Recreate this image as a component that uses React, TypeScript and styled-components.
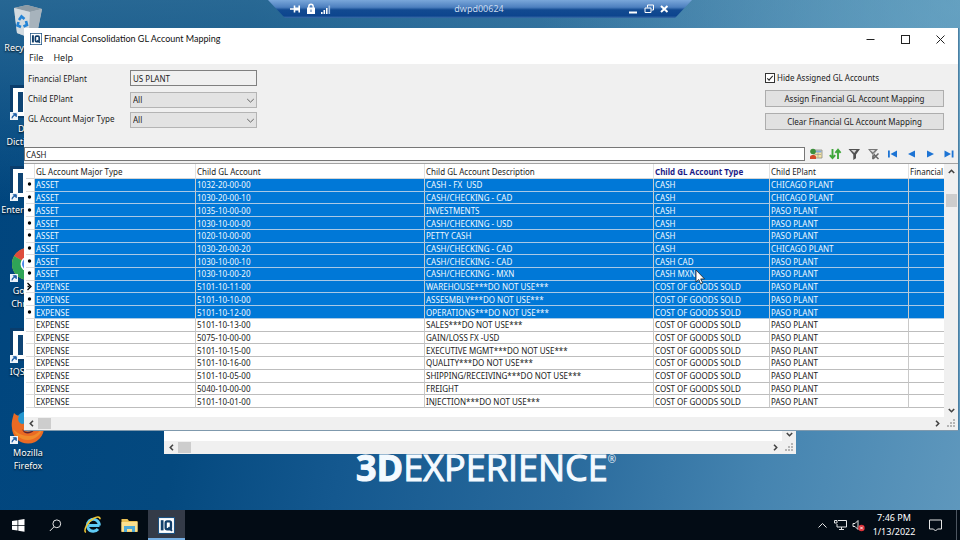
import React from "react";
import styled, { createGlobalStyle, css } from "styled-components";

const GlobalStyle = createGlobalStyle`
  *, *::before, *::after { box-sizing: border-box; }
  body { margin: 0; }
  body, button, input, select {
    font-family: "Noto Sans", "Open Sans", sans-serif;
    font-size: 9px;
    line-height: 12px;
    color: #1c1c1c;
  }
  button { border: 0; padding: 0; background: none; }
`;

/* ---------- desktop ---------- */

const Desktop = styled.main`
  position: relative;
  display: flex;
  flex-direction: column;
  min-height: 100vh;
  overflow: hidden;
  background:
    radial-gradient(circle at 100% 0, rgba(125, 185, 212, 0.5) 0, rgba(125, 185, 212, 0) 420px),
    linear-gradient(to bottom, rgba(70, 130, 165, 0.55) 0, rgba(40, 100, 150, 0) 200px),
    linear-gradient(100deg, #00457e 0%, #04497f 24%, #14588f 40%, #2a6b9d 62%, #4584b0 80%, #5f98bd 100%);
`;

const Workspace = styled.div`
  flex: 1;
  padding-top: 4px;
`;

const IconColumn = styled.nav`
  display: flex;
  flex-direction: column;
  width: 56px;
`;

const Shortcut = styled.a`
  display: flex;
  flex-direction: column;
  align-items: center;
  height: 81px;
  color: #fff;
  line-height: 13px;
  text-align: center;
  text-decoration: none;
  text-shadow: 0 1px 2px #000;
  svg { margin-bottom: 1px; }
`;

const Brand = styled.div`
  position: absolute;
  left: 356px;
  bottom: 50px;
  color: #f4faff;
  font-family: "Open Sans", sans-serif;
  font-size: 36px;
  line-height: 44px;
  white-space: nowrap;
  -webkit-text-stroke: 1px #f4faff;
  b { font-weight: 700; }
  sup {
    font-size: 10px;
    line-height: 10px;
    vertical-align: 18px;
    -webkit-text-stroke: 0;
  }
`;

/* ---------- remote session bar ---------- */

const SessionBar = styled.header`
  position: absolute;
  top: 0;
  left: 50%;
  z-index: 3;
  display: flex;
  align-items: center;
  justify-content: space-between;
  width: 424px;
  height: 18px;
  padding: 0 22px 0 20px;
  transform: translateX(-50%);
  clip-path: polygon(0 0, 100% 0, 96% 100%, 4% 100%);
  background: linear-gradient(#7aa7da 0, #4d80bf 40%, #124a91 55%, #0d458e 88%, #3c6da8 100%);
  color: #c9daee;
`;

const SessionIcons = styled.div<{ $end?: boolean }>`
  display: flex;
  align-items: center;
  justify-content: ${(p) => (p.$end ? "flex-end" : "flex-start")};
  gap: 4px;
  width: 54px;
`;

const SessionButton = styled.button`
  display: flex;
  color: #fff;
`;

/* ---------- windows ---------- */

const AppWindow = styled.section`
  position: absolute;
  top: 28px;
  left: 24px;
  right: 2px;
  z-index: 2;
  display: flex;
  flex-direction: column;
  background: #f0f0f0;
  box-shadow: 0 1px 0 #7f99ad, 1px 0 0 #4b7fa3;
`;

const BackWindow = styled.section`
  position: absolute;
  top: 400px;
  left: 164px;
  right: 164px;
  z-index: 1;
  display: flex;
  flex-direction: column;
  background: #fff;
`;

const BackBody = styled.div`
  display: flex;
  justify-content: flex-end;
  height: 41px;
`;

const TitleBar = styled.div`
  display: flex;
  align-items: center;
  height: 22px;
  padding: 0 12px 0 6px;
  gap: 2px;
  background: #fff;
`;

const Title = styled.h1`
  flex: 1;
  margin: 0;
  font-family: Lato, "Noto Sans", sans-serif;
  font-size: 9px;
  font-weight: 400;
  line-height: 14px;
  color: #111;
`;

const CaptionButtons = styled.div`
  display: flex;
  gap: 24px;
  button { display: flex; color: #222; }
`;

const MenuBar = styled.nav`
  display: flex;
  gap: 10px;
  height: 14px;
  padding-left: 5px;
  background: #fff;
  button { line-height: 16px; }
`;

const Form = styled.div`
  display: flex;
  justify-content: space-between;
  align-items: flex-start;
  height: 83px;
  padding: 6px 14px 0 4px;
  label, input, select, button { font-size: 8px; }
`;

const Fields = styled.div`
  display: grid;
  grid-template-columns: 102px 127px;
  row-gap: 4px;
  label { line-height: 14px; white-space: nowrap; }
  label:first-child { line-height: 18px; }
`;

const box = css`
  width: 100%;
  height: 16px;
  border: 1px solid #9a9a9a;
  border-radius: 0;
  padding: 0 2px;
`;

const ReadOnlyInput = styled.input`
  ${box}
  margin-bottom: 2px;
  background: #f0f0f0;
  border-color: #808080;
`;

const SelectBox = styled.span`
  position: relative;
  display: flex;
  select {
    ${box}
    appearance: none;
    background: #e3e3e3;
    border-color: #b4b4b4;
  }
  svg { position: absolute; right: 2px; top: 4px; pointer-events: none; }
`;

const Actions = styled.div`
  display: flex;
  flex-direction: column;
  width: 179px;
  padding-top: 1px;
  gap: 6px;
`;

const CheckLabel = styled.label`
  display: flex;
  align-items: center;
  gap: 2px;
  height: 13px;
  input {
    appearance: none;
    display: grid;
    place-items: center;
    width: 10px;
    height: 10px;
    margin: 0;
    border: 1px solid #333;
    background: #fff;
  }
  input:checked::before {
    content: "";
    width: 6px;
    height: 3px;
    border: solid #222;
    border-width: 0 0 1px 1px;
    transform: rotate(-48deg);
  }
`;

const ActionButton = styled.button`
  height: 17px;
  border: 1px solid #adadad;
  background: #e1e1e1;
`;

const SearchRow = styled.div`
  display: flex;
  align-items: center;
  height: 14px;
  input {
    flex: 1;
    min-width: 0;
    height: 14px;
    border: 1px solid #777;
    padding: 0 1px;
    background: #fff;
    font-size: 8px;
  }
`;

const Tools = styled.div`
  display: grid;
  grid-template-columns: repeat(8, 19px);
  width: 152px;
  margin-left: 1px;
  button { display: flex; justify-content: center; }
`;

/* ---------- grid ---------- */

const GridPanel = styled.div`
  display: flex;
  margin-top: 2px;
  border-top: 1px solid #a3a3a3;
  background: #fff;
`;

const TableArea = styled.div`
  flex: 1;
  min-width: 0;
  padding: 0 0 9px 2px;
  overflow: hidden;
`;

const Table = styled.table`
  width: 100%;
  height: 244px;
  table-layout: fixed;
  border-collapse: separate;
  border-spacing: 0;
  font-size: 8px;
  th, td {
    padding: 0 0 0 1px;
    overflow: hidden;
    line-height: 11px;
    text-align: left;
    font-weight: 400;
    white-space: pre;
    border-right: 1px solid #c9c9c9;
  }
  th { height: 15px; border-color: #e2e2e2; border-bottom: 1px solid #d4d4d4; }
  th:last-child, td:last-child { border-right: 0; }
`;

const SortedHeader = styled.th`
  && { font-weight: 700; color: #1d1d86; }
`;

const Row = styled.tr<{ $selected: boolean }>`
  td {
    border-bottom: 1px solid ${(p) => (p.$selected ? "#a9c9e6" : "#bdbdbd")};
    background: ${(p) => (p.$selected ? "#0078d7" : "#fff")};
    color: ${(p) => (p.$selected ? "#f0f8ff" : "#1a1a1a")};
  }
  td:first-child {
    padding: 0;
    background: #fff;
    border-bottom-color: #dcdcdc;
    color: #000;
  }
  td svg { display: block; margin: 0 auto; }
`;

const VScroll = styled.div`
  display: flex;
  flex-direction: column;
  align-items: center;
  width: 14px;
  background: #f0f0f0;
  button { display: flex; align-items: center; justify-content: center; height: 14px; }
`;

const HScroll = styled.div`
  display: flex;
  align-items: center;
  height: 13px;
  padding-right: 2px;
  background: #f0f0f0;
  button { display: flex; align-items: center; justify-content: center; width: 14px; }
  button:nth-last-of-type(1) { margin-right: 3px; }
`;

const Thumb = styled.div<{ $vertical?: boolean }>`
  width: ${(p) => (p.$vertical ? "11px" : "13px")};
  height: ${(p) => (p.$vertical ? "13px" : "11px")};
  margin-top: ${(p) => (p.$vertical ? "16px" : "0")};
  background: #cdcdcd;
`;

const Spacer = styled.div`
  flex: 1;
`;

/* ---------- taskbar ---------- */

const Taskbar = styled.footer`
  position: relative;
  z-index: 4;
  display: flex;
  align-items: stretch;
  height: 30px;
  background: #030c15;
  color: #fff;
`;

const TaskButton = styled.button<{ $active?: boolean }>`
  display: flex;
  align-items: center;
  justify-content: center;
  width: 37px;
  background: ${(p) => (p.$active ? "#343b48" : "transparent")};
  border-bottom: 2px solid ${(p) => (p.$active ? "#76b0e4" : "transparent")};
  border-top: 2px solid transparent;
`;

const Tray = styled.div`
  display: flex;
  align-items: center;
  margin-left: auto;
  padding-right: 3px;
  button { display: flex; justify-content: center; width: 18px; }
`;

const Clock = styled.time`
  width: 54px;
  text-align: center;
  line-height: 14px;
`;

const NotifyArea = styled.div`
  display: flex;
  align-items: center;
  justify-content: center;
  align-self: stretch;
  width: 36px;
  border-right: 1px solid #4d5660;
  padding-right: 7px;
`;

const Pointer = styled.svg`
  position: absolute;
  left: 695px;
  top: 269px;
  z-index: 5;
`;

/* ---------- drawings ---------- */

const Chevron = ({ dir, thin }: { dir: "up" | "down" | "left" | "right"; thin?: boolean }) => {
  const turn = { up: 0, right: 90, down: 180, left: 270 }[dir];
  return (
    <svg width="9" height="9" viewBox="0 0 9 9" aria-hidden="true">
      <path
        d={thin ? "M1.200 6 4.500 2.900 7.800 6" : "M1.800 6 4.500 3.300 7.200 6"}
        transform={`rotate(${turn} 4.5 4.5)`}
        fill="none"
        stroke={thin ? "#666" : "#444"}
        strokeWidth={thin ? 1 : 1.6}
      />
    </svg>
  );
};

const Grip = () => (
  <svg width="9" height="9" viewBox="0 0 9 9" fill="#b5b5b5" aria-hidden="true">
    <path d="M6 0h2v2H6zM6 3h2v2H6zM3 3h2v2H3zM6 6h2v2H6zM3 6h2v2H3zM0 6h2v2H0z" />
  </svg>
);

const IqMark = ({ size }: { size: number }) => (
  <svg width={size} height={size} viewBox="0 0 16 16" aria-hidden="true">
    <rect width="16" height="16" fill="#fff" />
    <rect x="0.5" y="0.5" width="15" height="15" fill="none" stroke="#1c5180" />
    <rect x="2.6" y="3" width="2.6" height="9.6" fill="#123f6b" />
    <rect x="7.2" y="4.1" width="5" height="7.4" rx="1.4" fill="none" stroke="#123f6b" strokeWidth="2.2" />
    <path d="M9.8 9.6l3.4 3.4" stroke="#123f6b" strokeWidth="1.8" />
  </svg>
);

const ShortcutArrow = () => (
  <g>
    <rect x="0" y="27" width="8" height="8" fill="#eef4fa" />
    <path d="M2 33.4c0-2.200 1-3.400 3-3.400M3.300 28.700h3v3z" fill="#1f5fa8" stroke="#1f5fa8" strokeWidth="1" />
  </g>
);

const RecycleBin = () => (
  <svg width="36" height="36" viewBox="0 0 36 36" aria-hidden="true">
    <path d="M4 4 17 1l15 4-5 25-12 2-8-3z" fill="#b9c4cc" />
    <path d="M4 4 17 1l15 4-12 3z" fill="#8d9ba5" />
    <path d="M4 4l16 4-1 23-4 1-8-3z" fill="#d3dbe0" />
    <path d="M20 8l12-3-5 25-8 1z" fill="#a7b3bc" />
    <g fill="none" stroke="#2384d6" strokeWidth="2.600">
      <path d="M9 16l2.500-3.500 3 2.500" />
      <path d="M16 17l1 4-3.500 1.500" />
      <path d="M11 23l-3.500-1.500 1-3.500" />
    </g>
  </svg>
);

const IqShortcut = () => (
  <svg width="36" height="36" viewBox="0 0 36 36" aria-hidden="true">
    <rect width="36" height="33" fill="#0a3d6c" />
    <path d="M3 3h30v28H3z" fill="#fff" />
    <path d="M8 7h5v20H8zM17 7h12v20H17z" fill="#0f4474" />
    <ShortcutArrow />
  </svg>
);

const ChromeIcon = () => (
  <svg width="36" height="36" viewBox="0 0 36 36" aria-hidden="true">
    <circle cx="18" cy="17" r="16" fill="#f2c02c" />
    <path d="M18 17 4.100 9A16 16 0 0 1 31.900 9z" fill="#de4c3c" />
    <path d="M18 17l-4 15.500A16 16 0 0 1 4.100 9z" fill="#2fa457" />
    <circle cx="18" cy="17" r="7.500" fill="#fff" />
    <circle cx="18" cy="17" r="6" fill="#4a86e8" />
    <ShortcutArrow />
  </svg>
);

const FirefoxIcon = () => (
  <svg width="36" height="36" viewBox="0 0 36 36" aria-hidden="true">
    <circle cx="18" cy="15" r="13" fill="#2496cf" />
    <path d="M4 4c2 2 3 2 5 3-2 4 0 7 3 8l5-1c-1 3-3 4-3 6 2 4 9 3 11-2 3-6 0-10-2-13 8 3 11 8 11 13A16 16 0 0 1 2 19C1 13 3 8 4 4z" fill="#ea6a24" />
    <path d="M3 20c3 9 12 13 20 10 6-2 10-8 10-14-2 6-7 11-14 11S7 24 3 20z" fill="#f08b2c" />
    <path d="M12 20c3 4 9 4 13-1-1 6-11 8-13 1z" fill="#5b2333" />
    <ShortcutArrow />
  </svg>
);

const toolIcons: { label: string; art: React.ReactNode }[] = [
  {
    label: "Edit records",
    art: (
      <>
        <path d="M5 3h8v8H5z" fill="#f3e3a4" stroke="#8b8b80" strokeWidth="0.800" />
        <path d="M5.500 3.500h7v2h-7z" fill="#86a9d6" />
        <path d="M6 7.500h6M9 5.500v5" stroke="#999" strokeWidth="0.700" />
        <circle cx="4" cy="4.500" r="2.800" fill="#3d8f3c" />
        <path d="M1 9.500c1-2 5-2 6 0V12H1z" fill="#d2492a" />
      </>
    ),
  },
  {
    label: "Sort",
    art: (
      <g fill="none" stroke="#3fa63a" strokeWidth="1.900">
        <path d="M4.500 2v9M1.800 8.200l2.700 3 2.700-3" />
        <path d="M10 12V3M7.400 5.800l2.600-3 2.600 3" />
      </g>
    ),
  },
  {
    label: "Filter",
    art: (
      <>
        <path d="M1.500 2h11.500L9 7.500v3.800L6.300 13V7.500z" fill="#505050" />
        <path d="M4 3h5.500L7.300 6z" fill="#d4d4d4" />
      </>
    ),
  },
  {
    label: "Clear filter",
    art: (
      <>
        <path d="M2 2h10L8.500 7v4L6 12.500V7z" fill="#777" />
        <path d="M4 3h5L7 5.500z" fill="#ddd" />
        <path d="M7 6.500l5.500 5.500M12.500 6.500 7 12" stroke="#666" strokeWidth="1.500" />
        <path d="M2 12 12 3" stroke="#eee" strokeWidth="0.800" />
      </>
    ),
  },
  { label: "First", art: <path d="M3 3.500h1.800v7H3zM12 3.500v7L5.500 7z" fill="#1d74d4" /> },
  { label: "Previous", art: <path d="M11 3.500v7L4 7z" fill="#1d74d4" /> },
  { label: "Next", art: <path d="M4 3.500v7L11 7z" fill="#1d74d4" /> },
  { label: "Last", art: <path d="M2.500 3.500v7L9 7zM9.700 3.500h1.800v7H9.700z" fill="#1d74d4" /> },
];

/* ---------- data ---------- */

type Account = [string, string, string, string, string];

const cogs = "COST OF GOODS SOLD";
const paso = "PASO PLANT";
const chicago = "CHICAGO PLANT";

const accounts: Account[] = [
  ["ASSET", "1032-20-00-00", "CASH - FX  USD", "CASH", chicago],
  ["ASSET", "1030-20-00-10", "CASH/CHECKING - CAD", "CASH", chicago],
  ["ASSET", "1035-10-00-00", "INVESTMENTS", "CASH", paso],
  ["ASSET", "1030-10-00-00", "CASH/CHECKING - USD", "CASH", paso],
  ["ASSET", "1020-10-00-00", "PETTY CASH", "CASH", paso],
  ["ASSET", "1030-20-00-20", "CASH/CHECKING - CAD", "CASH", chicago],
  ["ASSET", "1030-10-00-10", "CASH/CHECKING - CAD", "CASH CAD", paso],
  ["ASSET", "1030-10-00-20", "CASH/CHECKING - MXN", "CASH MXN", paso],
  ["EXPENSE", "5101-10-11-00", "WAREHOUSE***DO NOT USE***", cogs, paso],
  ["EXPENSE", "5101-10-10-00", "ASSESMBLY***DO NOT USE***", cogs, paso],
  ["EXPENSE", "5101-10-12-00", "OPERATIONS***DO NOT USE***", cogs, paso],
  ["EXPENSE", "5101-10-13-00", "SALES***DO NOT USE***", cogs, paso],
  ["EXPENSE", "5075-10-00-00", "GAIN/LOSS FX -USD", cogs, paso],
  ["EXPENSE", "5101-10-15-00", "EXECUTIVE MGMT***DO NOT USE***", cogs, paso],
  ["EXPENSE", "5101-10-16-00", "QUALITY***DO NOT USE***", cogs, paso],
  ["EXPENSE", "5101-10-05-00", "SHIPPING/RECEIVING***DO NOT USE***", cogs, paso],
  ["EXPENSE", "5040-10-00-00", "FREIGHT", cogs, paso],
  ["EXPENSE", "5101-10-01-00", "INJECTION***DO NOT USE***", cogs, paso],
];

const SELECTED_COUNT = 11;
const CURRENT_ROW = 8;

const RowMarker = ({ index }: { index: number }) => {
  if (index >= SELECTED_COUNT) return null;
  return (
    <svg width="8" height="9" viewBox="0 0 8 9" aria-hidden="true">
      {index === CURRENT_ROW ? (
        <path d="M1.500 1 5 4.500 1.500 8M1.500 4.500h2" fill="none" stroke="#000" strokeWidth="1.300" />
      ) : (
        <circle cx="3.500" cy="4" r="1.700" fill="#000" />
      )}
    </svg>
  );
};

/* ---------- page ---------- */

const shortcuts: { id: string; icon: React.ReactNode; lines: string[] }[] = [
  { id: "bin", icon: <RecycleBin />, lines: ["Recycle Bin"] },
  { id: "dictionary", icon: <IqShortcut />, lines: ["Data", "Dictionary"] },
  { id: "enterprise", icon: <IqShortcut />, lines: ["EnterpriseIQ"] },
  { id: "chrome", icon: <ChromeIcon />, lines: ["Google", "Chrome"] },
  { id: "status", icon: <IqShortcut />, lines: ["IQStatus"] },
  { id: "firefox", icon: <FirefoxIcon />, lines: ["Mozilla", "Firefox"] },
];

const HorizontalScroll = () => (
  <HScroll>
    <button aria-label="Scroll left"><Chevron dir="left" /></button>
    <Thumb />
    <Spacer />
    <button aria-label="Scroll right"><Chevron dir="right" /></button>
    <Grip />
  </HScroll>
);

export default function App() {
  return (
    <>
      <GlobalStyle />
      <Desktop>
        <SessionBar>
          <SessionIcons>
            <SessionButton aria-label="Pin">
              <svg width="14" height="12" viewBox="0 0 14 12">
                <path d="M2 6h4M6.500 2.500v7M7 5.900h4M11.200 2.500v7" stroke="#fff" strokeWidth="1.600" />
                <path d="M7 4.500h4v3H7z" fill="#fff" />
              </svg>
            </SessionButton>
            <svg width="10" height="12" viewBox="0 0 10 12" aria-hidden="true">
              <rect x="1" y="4.500" width="8" height="6.500" fill="#fff" />
              <path d="M2.800 5V3.500a2.200 2.200 0 0 1 4.400 0V5" fill="none" stroke="#fff" strokeWidth="1.400" />
              <rect x="4.500" y="6.500" width="1" height="2.500" fill="#3c6da8" />
            </svg>
            <svg width="12" height="12" viewBox="0 0 12 12" fill="#fff" aria-hidden="true">
              <path d="M1 9h1.600v2H1zM3.500 7h1.600v4H3.500zM6 5h1.600v6H6z" />
              <path d="M8.500 2.500h1.600V11H8.500z" fill="#9dbbe0" />
            </svg>
          </SessionIcons>
          <span>dwpd00624</span>
          <SessionIcons $end>
            <SessionButton aria-label="Minimize session">
              <svg width="12" height="12" viewBox="0 0 12 12"><path d="M2 9.500h8" stroke="#fff" strokeWidth="2" /></svg>
            </SessionButton>
            <SessionButton aria-label="Restore session">
              <svg width="12" height="12" viewBox="0 0 12 12" fill="none" stroke="#fff">
                <path d="M4.500 4.500V2h6v5H8.500" />
                <path d="M2 5h6v4.500H2z" />
              </svg>
            </SessionButton>
            <SessionButton aria-label="Close session">
              <svg width="11" height="12" viewBox="0 0 11 12"><path d="M2 3l6.500 6M8.500 3 2 9" stroke="#fff" strokeWidth="2" /></svg>
            </SessionButton>
          </SessionIcons>
        </SessionBar>

        <Workspace>
          <IconColumn aria-label="Desktop">
            {shortcuts.map((s) => (
              <Shortcut href="#" key={s.id}>
                {s.icon}
                {s.lines.map((line) => <span key={line}>{line}</span>)}
              </Shortcut>
            ))}
          </IconColumn>
        </Workspace>
        <Brand><b>3D</b>EXPERIENCE<sup>®</sup></Brand>

        <BackWindow>
          <BackBody>
            <VScroll>
              <Spacer />
              <button aria-label="Scroll down"><Chevron dir="down" /></button>
            </VScroll>
          </BackBody>
          <HorizontalScroll />
        </BackWindow>

        <AppWindow>
          <TitleBar>
            <IqMark size={12} />
            <Title>Financial Consolidation GL Account Mapping</Title>
            <CaptionButtons>
              <button aria-label="Minimize">
                <svg width="11" height="11" viewBox="0 0 11 11"><path d="M1.500 5.500h8" stroke="currentColor" /></svg>
              </button>
              <button aria-label="Maximize">
                <svg width="11" height="11" viewBox="0 0 11 11"><rect x="1.500" y="1.500" width="8" height="8" fill="none" stroke="currentColor" /></svg>
              </button>
              <button aria-label="Close">
                <svg width="11" height="11" viewBox="0 0 11 11"><path d="M1.500 1.500l8 8M9.500 1.500l-8 8" stroke="currentColor" /></svg>
              </button>
            </CaptionButtons>
          </TitleBar>
          <MenuBar>
            <button>File</button>
            <button>Help</button>
          </MenuBar>

          <Form>
            <Fields>
              <label htmlFor="plant">Financial EPlant</label>
              <ReadOnlyInput id="plant" readOnly defaultValue="US PLANT" />
              <label htmlFor="child">Child EPlant</label>
              <SelectBox>
                <select id="child"><option>All</option></select>
                <Chevron dir="down" thin />
              </SelectBox>
              <label htmlFor="major">GL Account Major Type</label>
              <SelectBox>
                <select id="major"><option>All</option></select>
                <Chevron dir="down" thin />
              </SelectBox>
            </Fields>
            <Actions>
              <CheckLabel>
                <input type="checkbox" defaultChecked />
                Hide Assigned GL Accounts
              </CheckLabel>
              <ActionButton>Assign Financial GL Account Mapping</ActionButton>
              <ActionButton>Clear Financial GL Account Mapping</ActionButton>
            </Actions>
          </Form>

          <SearchRow>
            <input aria-label="Search" defaultValue="CASH" />
            <Tools>
              {toolIcons.map((t) => (
                <button key={t.label} aria-label={t.label}>
                  <svg width="14" height="14" viewBox="0 0 14 14">{t.art}</svg>
                </button>
              ))}
            </Tools>
          </SearchRow>

          <GridPanel>
            <TableArea>
              <Table>
                <colgroup>
                  <col style={{ width: 9 }} />
                  <col style={{ width: 161 }} />
                  <col style={{ width: 229 }} />
                  <col style={{ width: 229 }} />
                  <col style={{ width: 116 }} />
                  <col style={{ width: 139 }} />
                  <col />
                </colgroup>
                <thead>
                  <tr>
                    <th />
                    <th>GL Account Major Type</th>
                    <th>Child GL Account</th>
                    <th>Child GL Account Description</th>
                    <SortedHeader>Child GL Account Type</SortedHeader>
                    <th>Child EPlant</th>
                    <th>Financial</th>
                  </tr>
                </thead>
                <tbody>
                  {accounts.map((account, i) => (
                    <Row key={account[1]} $selected={i < SELECTED_COUNT}>
                      <td><RowMarker index={i} /></td>
                      {account.map((value, c) => <td key={c}>{value}</td>)}
                      <td />
                    </Row>
                  ))}
                </tbody>
              </Table>
            </TableArea>
            <VScroll>
              <button aria-label="Scroll up"><Chevron dir="up" /></button>
              <Thumb $vertical />
              <Spacer />
              <button aria-label="Scroll down"><Chevron dir="down" /></button>
            </VScroll>
          </GridPanel>
          <HorizontalScroll />
        </AppWindow>

        <Taskbar>
          <TaskButton aria-label="Start">
            <svg width="13" height="13" viewBox="0 0 13 13" fill="#fff">
              <path d="M0 2 5.500 1.200V6H0zM6.300 1.100 12.500 0v6H6.300zM0 6.800h5.500v4.800L0 10.800zM6.300 6.800h6.200v6l-6.200-1.100z" />
            </svg>
          </TaskButton>
          <TaskButton aria-label="Search">
            <svg width="13" height="13" viewBox="0 0 13 13" fill="none" stroke="#e6e6e6">
              <circle cx="7.800" cy="4.800" r="3.900" />
              <path d="M5 7.800.8 12" />
            </svg>
          </TaskButton>
          <TaskButton aria-label="Internet Explorer">
            <svg width="18" height="18" viewBox="0 0 18 18" fill="none">
              <path d="M15.500 9.500H5M15.300 9.500A6 6 0 1 0 14 13" stroke="#5ecbf5" strokeWidth="3" />
              <path d="M1.800 16.500C-1 14 4 5.500 9.500 2.500c3-1.800 6.500-2.300 6.600.8" stroke="#f2c832" strokeWidth="1.500" />
            </svg>
          </TaskButton>
          <TaskButton aria-label="File Explorer">
            <svg width="17" height="15" viewBox="0 0 17 15">
              <path d="M.5 1h6l1.500 2h8.500v11H.5z" fill="#e9bf54" />
              <path d="M.5 4h16v9.500H.5z" fill="#fbe08f" />
              <path d="M3 14V8h11v6h-3v-3H6v3z" fill="#4ea9d6" />
            </svg>
          </TaskButton>
          <TaskButton $active aria-label="Financial Consolidation"><IqMark size={17} /></TaskButton>
          <Tray>
            <button aria-label="Show hidden icons">
              <svg width="11" height="9" viewBox="0 0 11 9"><path d="M1.500 6.500l4-4 4 4" fill="none" stroke="#e6e6e6" /></svg>
            </button>
            <button aria-label="Network">
              <svg width="13" height="12" viewBox="0 0 13 12" fill="none" stroke="#e6e6e6">
                <path d="M4 1.500h8.500v6.500H3V5M5 10.500h5M7.500 8v2.500" />
                <path d="M.5 1.500H3v2.500H.5z" />
              </svg>
            </button>
            <button aria-label="Volume muted">
              <svg width="13" height="13" viewBox="0 0 13 13">
                <path d="M1 4.500h2l3-3v9l-3-3H1z" fill="none" stroke="#e6e6e6" />
                <circle cx="9.500" cy="9" r="3.200" fill="#dc3239" />
                <path d="M8.200 7.700l2.600 2.600M10.800 7.700l-2.600 2.600" stroke="#fff" strokeWidth="0.900" />
              </svg>
            </button>
            <Clock>7:46 PM<br />1/13/2022</Clock>
            <NotifyArea>
              <button aria-label="Notifications">
                <svg width="13" height="13" viewBox="0 0 13 13"><path d="M.5 1h12v9H8.500l-2 2-2-2h-4z" fill="none" stroke="#e6e6e6" /></svg>
              </button>
            </NotifyArea>
          </Tray>
        </Taskbar>

        <Pointer width="11" height="16" viewBox="0 0 11 16" aria-hidden="true">
          <path d="M1 1v12l2.800-2.500L5.600 15l2-.9-1.900-4.200h3.800z" fill="#fff" stroke="#222" strokeWidth="0.800" />
        </Pointer>
      </Desktop>
    </>
  );
}
